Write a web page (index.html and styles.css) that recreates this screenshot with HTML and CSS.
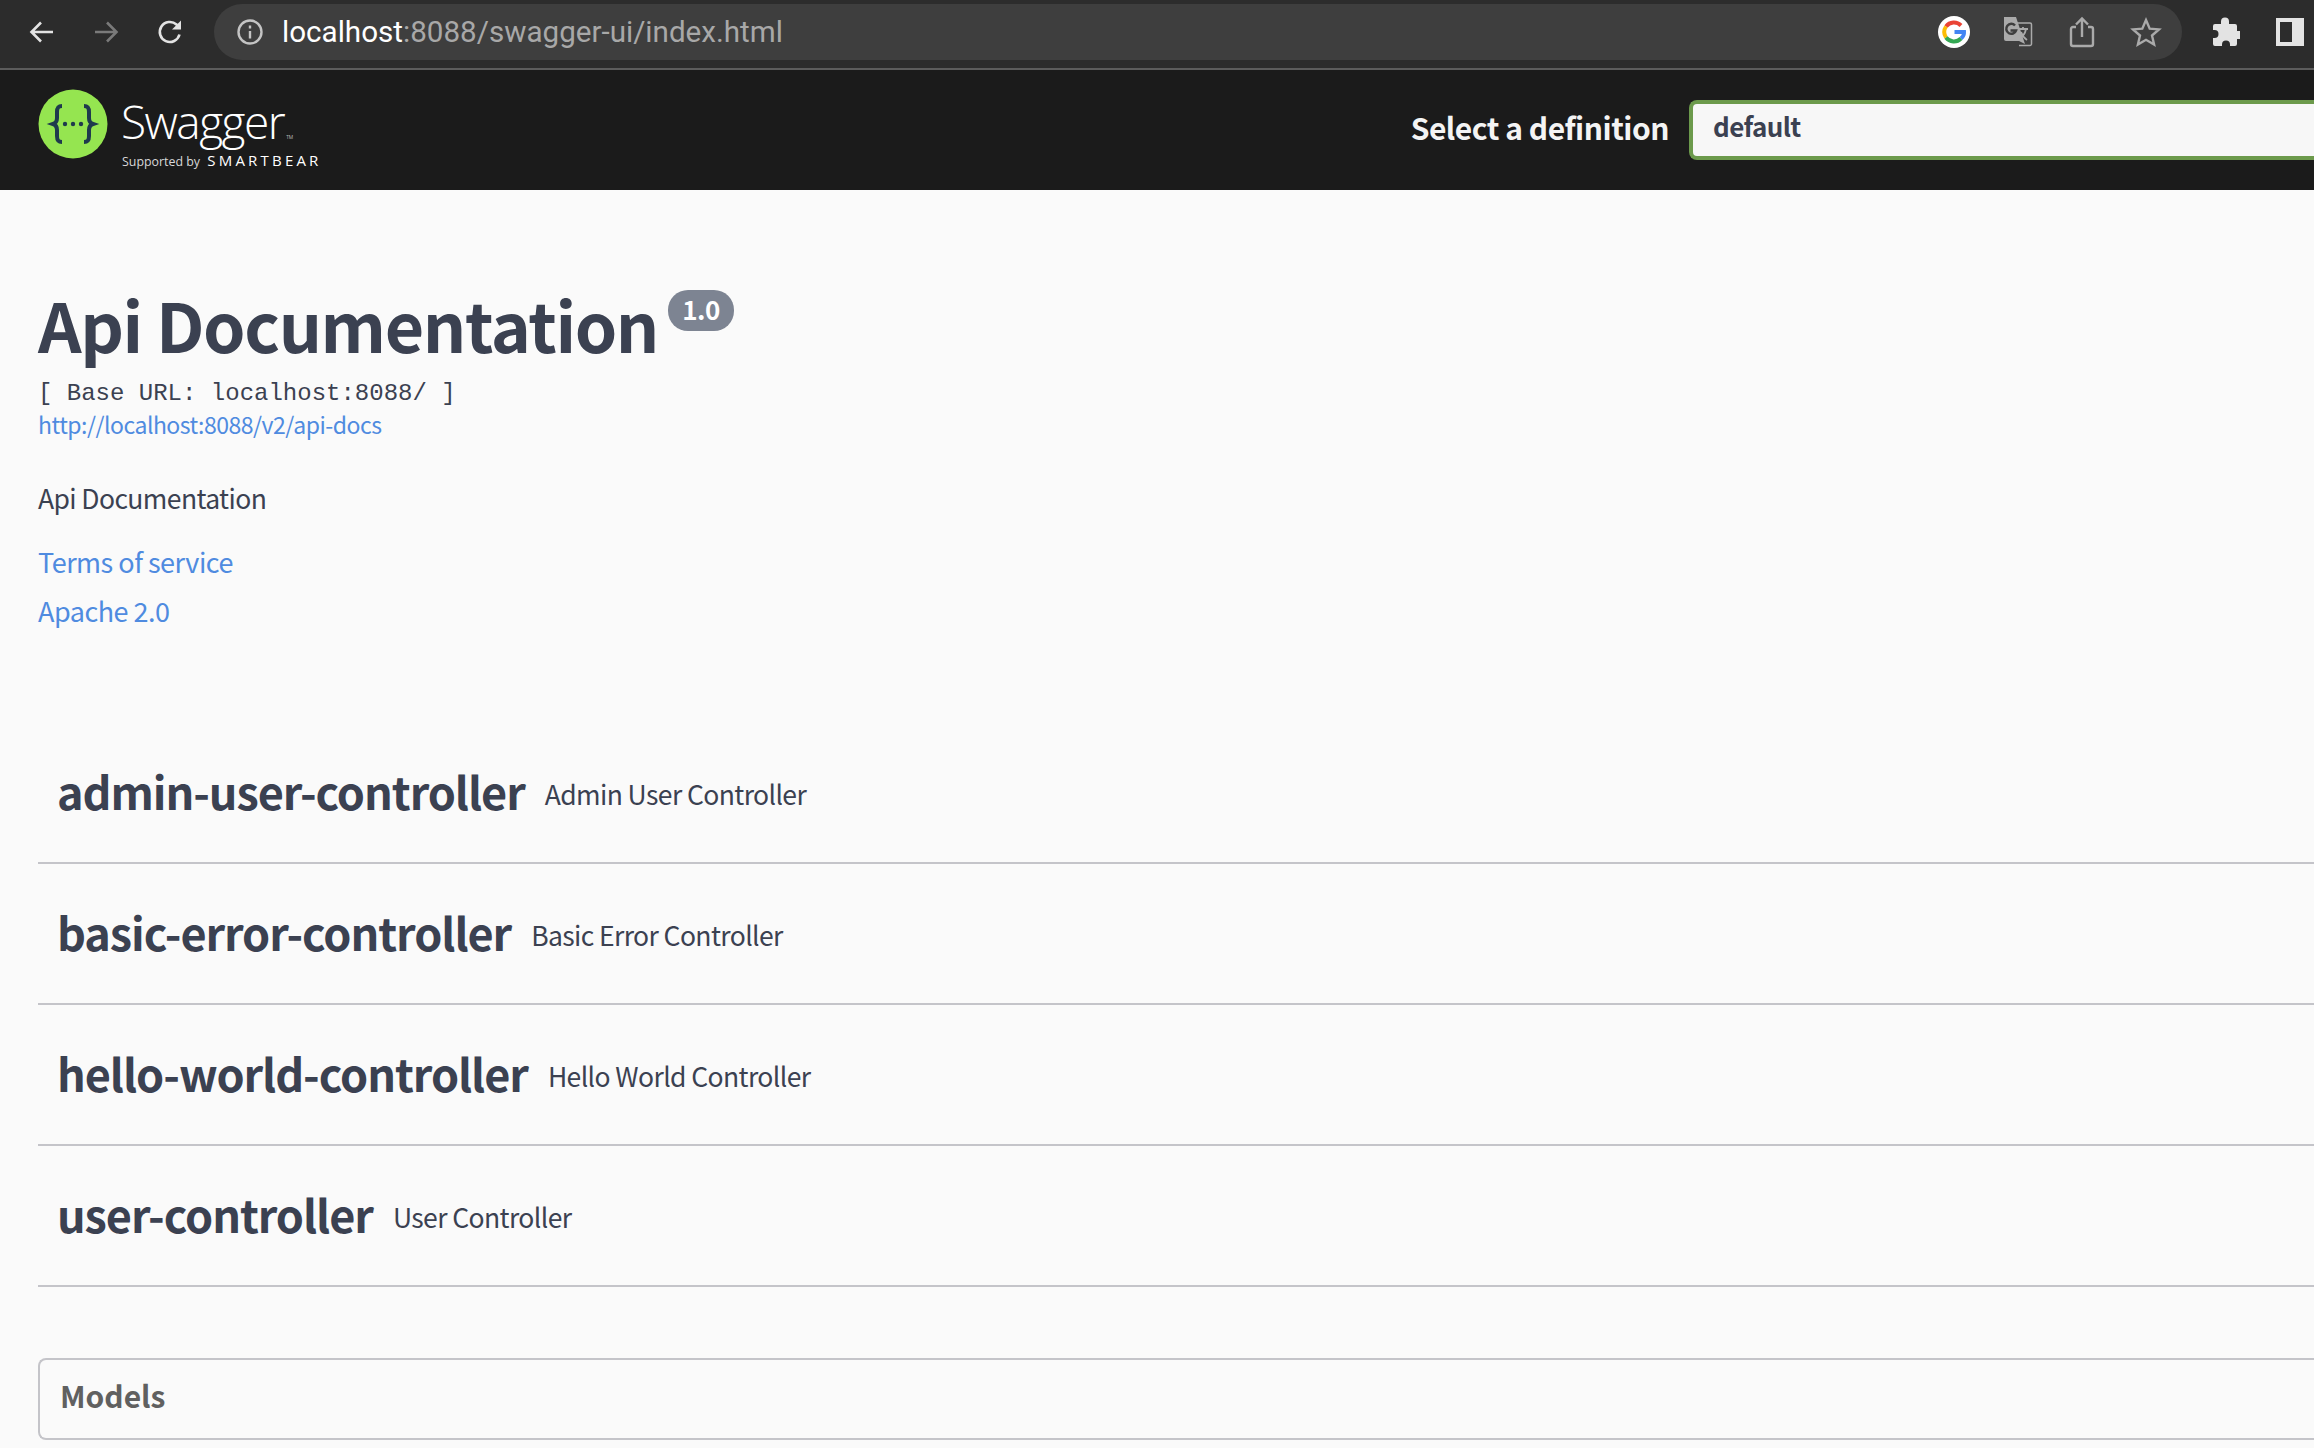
FILE: index.html
```html
<!DOCTYPE html>
<html lang="en">
<head>
    <meta charset="UTF-8">
    <meta name="viewport" content="width=device-width, initial-scale=1.0">
    <title>Swagger UI</title>
    <link rel="stylesheet" href="styles.css">
</head>
<body>
    <div class="browser-bar">
        <div class="nav-buttons">
            <svg class="nav-icon" viewBox="0 0 28 28"><path d="M25 14H4M13 4.500L3.500 14l9.500 9.500"/></svg>
            <svg class="nav-icon nav-icon-off" viewBox="0 0 28 28"><path d="M3 14h21M15 4.500l9.500 9.500-9.500 9.500"/></svg>
            <svg class="nav-icon" viewBox="0 0 28 28"><path d="M23.500 16.500A10 10 0 1 1 20.500 6.500L24 10"/><path class="solid" d="M25 2.500V11.500H16z"/></svg>
        </div>
        <div class="omnibox">
            <svg class="info-icon" viewBox="0 0 28 28"><circle cx="14" cy="14" r="11.500"/><path d="M14 13v7.500M14 7.500v3"/></svg>
            <div class="url"><span class="url-host">localhost</span>:8088/swagger-ui/index.html</div>
            <div class="omni-actions">
                <svg class="omni-icon" viewBox="0 0 32 32">
                    <circle cx="16" cy="16" r="16" fill="#fff"/>
                    <path d="M23 9.500A10 10 0 0 0 8 10.500" stroke="#ea4335"/>
                    <path d="M8 10.500a10 10 0 0 0 0 11" stroke="#fbbc05"/>
                    <path d="M8 21.500a10 10 0 0 0 15 1" stroke="#34a853"/>
                    <path d="M16.500 16H26c.2 3-1 5-3 6.500" stroke="#4285f4"/>
                </svg>
                <svg class="omni-icon translate-icon" viewBox="0 0 32 32">
                    <path fill="#aaa" d="M3 1h12l9 27-6-3H5a2 2 0 0 1-2-2z"/>
                    <path fill="none" stroke="#aaa" stroke-width="1.500" d="M15 7h14a1.500 1.500 0 0 1 1.500 1.500V28a1.500 1.500 0 0 1-1.500 1.500H18"/>
                    <path fill="none" stroke="#3e3e3e" stroke-width="2.500" d="M14 9.500a5 5 0 1 0 1 5H9.500"/>
                    <path fill="none" stroke="#aaa" stroke-width="1.800" d="M18 13h9M22 11v2M25 13c-1 5-4 8-6.500 9M20 16c1 3 3 6 6 8"/>
                </svg>
                <svg class="omni-icon share-icon" viewBox="0 0 32 32"><path d="M10 11H7a2 2 0 0 0-2 2v15a2 2 0 0 0 2 2h18a2 2 0 0 0 2-2V13a2 2 0 0 0-2-2h-3M16 21V3M10 8.500L16 2.500l6 6"/></svg>
                <svg class="omni-icon star-icon" viewBox="0 0 32 32"><path d="M16 4l3.700 8.600 9.300.8-7 6.100 2.100 9.100L16 23.800l-8.100 4.800L10 19.500l-7-6.100 9.300-.8z"/></svg>
            </div>
        </div>
        <div class="ext-buttons">
            <svg class="ext-icon" viewBox="0 0 30 30"><path fill="#e3e3e3" d="M11 4.500a4 4 0 0 1 8 0V7h6a2 2 0 0 1 2 2v5h2a4 4 0 0 1 0 8h-2v5a2 2 0 0 1-2 2h-5v-1.500a4 4 0 0 0-8 0V29H5a2 2 0 0 1-2-2v-6h1.500a4 4 0 0 0 0-8H3V9a2 2 0 0 1 2-2h6z"/></svg>
            <div class="panel-icon"></div>
        </div>
    </div>

    <div class="topbar">
        <div class="logo">
            <svg class="logo-mark" viewBox="0 0 70 70">
                <circle cx="35" cy="35" r="34.500" fill="#95e550"/>
                <path class="brace" d="M24 17c-4 0-5 2-5 6v6c0 3-1 5-4 6 3 1 4 3 4 6v6c0 4 1 6 5 6"/>
                <path class="brace" d="M46 17c4 0 5 2 5 6v6c0 3 1 5 4 6-3 1-4 3-4 6v6c0 4-1 6-5 6"/>
                <circle cx="27" cy="35" r="2.200" fill="#1f3a4d"/>
                <circle cx="35" cy="35" r="2.200" fill="#1f3a4d"/>
                <circle cx="43" cy="35" r="2.200" fill="#1f3a4d"/>
            </svg>
            <div class="logo-text">
                <div class="logo-name">Swagger<span class="logo-tm">TM</span></div>
                <div class="logo-sub">Supported by <span class="logo-bear">SMARTBEAR</span></div>
            </div>
        </div>
        <div class="definition">
            <span class="definition-label">Select a definition</span>
            <div class="definition-select">default</div>
        </div>
    </div>

    <div class="page">
        <div class="info">
            <div class="title-row">
                <h2 class="title">Api Documentation</h2>
                <span class="version">1.0</span>
            </div>
            <div class="base-url">[ Base URL: localhost:8088/ ]</div>
            <a class="spec-link" href="#">http://localhost:8088/v2/api-docs</a>
            <p class="description">Api Documentation</p>
            <a class="info-link terms" href="#">Terms of service</a>
            <a class="info-link" href="#">Apache 2.0</a>
        </div>

        <div class="tags">
            <div class="tag">
                <h3>admin-user-controller</h3>
                <small>Admin User Controller</small>
            </div>
            <div class="tag">
                <h3>basic-error-controller</h3>
                <small>Basic Error Controller</small>
            </div>
            <div class="tag">
                <h3>hello-world-controller</h3>
                <small>Hello World Controller</small>
            </div>
            <div class="tag">
                <h3>user-controller</h3>
                <small>User Controller</small>
            </div>
        </div>

        <div class="models">
            <h4>Models</h4>
        </div>
    </div>
</body>
</html>
```

FILE: styles.css
```css
html, body {
    margin: 0;
    padding: 0;
}

body {
    height: 1448px;
    overflow: hidden;
    background-color: #fafafa;
    font-family: 'Noto Sans CJK KR', 'Noto Sans', sans-serif;
    color: #3b4151;
}

/* browser chrome */
.browser-bar {
    height: 64px;
    padding-bottom: 4px;
    display: flex;
    align-items: center;
    background-color: #2c2c2c;
    border-bottom: 2px solid #5c5c5c;
}

.nav-buttons {
    display: flex;
    gap: 36px;
    padding-left: 28px;
    width: 186px;
    box-sizing: border-box;
}

.nav-icon {
    width: 28px;
    height: 28px;
    fill: none;
    stroke: #e3e3e3;
    stroke-width: 2.6;
}

.nav-icon .solid {
    fill: #e3e3e3;
    stroke: none;
}

.nav-icon-off {
    stroke: #7a7a7a;
}

.omnibox {
    flex: none;
    width: 1968px;
    height: 56px;
    margin-left: 28px;
    display: flex;
    align-items: center;
    background-color: #3e3e3e;
    border-radius: 28px;
}

.info-icon {
    width: 28px;
    height: 28px;
    margin-left: 22px;
    fill: none;
    stroke: #c4c4c4;
    stroke-width: 2.4;
}

.url {
    margin-left: 18px;
    font-family: Roboto, sans-serif;
    font-size: 29.6px;
    color: #a8a8a8;
}

.url-host {
    color: #fff;
}

.omni-actions {
    margin-left: auto;
    display: flex;
    align-items: center;
    gap: 31px;
    padding-right: 20px;
}

.omni-icon {
    width: 32px;
    height: 32px;
    fill: none;
    stroke-width: 4;
}

.translate-icon {
    margin-right: 3px;
}

.share-icon, .star-icon {
    stroke: #aaa;
    stroke-width: 2.4;
}

.share-icon {
    margin-left: -1px;
    margin-right: 1px;
}

.ext-buttons {
    flex: none;
    display: flex;
    align-items: center;
    gap: 22px;
    margin-left: 28px;
}

.ext-icon {
    width: 30px;
    height: 30px;
}

.panel-icon {
    width: 28px;
    height: 28px;
    margin-left: 14px;
    box-sizing: border-box;
    border: 4px solid #e3e3e3;
    border-right-width: 12px;
}

/* swagger top bar */
.topbar {
    height: 120px;
    display: flex;
    align-items: center;
    justify-content: space-between;
    padding-left: 38px;
    background-color: #1b1b1b;
}

.logo {
    display: flex;
    align-items: center;
    gap: 14px;
    padding-bottom: 12px;
}

.logo-mark {
    width: 70px;
    height: 70px;
}

.brace {
    fill: none;
    stroke: #1f3a4d;
    stroke-width: 4;
}

.logo-text {
    margin-top: 32px;
    color: #fff;
}

.logo-name {
    margin-left: -1px;
    font-family: 'Open Sans', sans-serif;
    font-weight: 300;
    font-size: 46px;
    line-height: 26px;
    letter-spacing: -1.5px;
}

.logo-tm {
    font-size: 5px;
    letter-spacing: 0;
    margin-left: 2px;
}

.logo-sub {
    font-family: 'Open Sans', sans-serif;
    font-size: 12.4px;
    line-height: 20px;
    color: #d8d8d8;
}

.logo-bear {
    margin-left: 4px;
    font-size: 15px;
    font-weight: 500;
    letter-spacing: 3.2px;
    color: #fff;
}

.definition {
    display: flex;
    align-items: center;
    gap: 20px;
}

.definition-label {
    padding-bottom: 6px;
    font-size: 30px;
    font-weight: 700;
    letter-spacing: -0.48px;
    color: #f4f4f4;
}

.definition-select {
    width: 625px;
    height: 60px;
    box-sizing: border-box;
    padding-left: 20px;
    font-size: 26px;
    font-weight: 700;
    letter-spacing: -0.6px;
    line-height: 44px;
    background-color: #f7f7f7;
    border: 4px solid #6c9a4c;
    border-right: none;
    border-radius: 8px 0 0 8px;
}

/* page content */
.page {
    padding-left: 38px;
}

.info {
    padding-top: 84px;
}

.title-row {
    display: flex;
    align-items: flex-start;
    gap: 10px;
}

.title {
    margin: 0;
    font-size: 68px;
    font-weight: 700;
    letter-spacing: -1.4px;
    line-height: 100px;
}

.version {
    margin-top: 16px;
    width: 66px;
    height: 41px;
    font-size: 26px;
    font-weight: 700;
    letter-spacing: -0.5px;
    line-height: 37px;
    text-align: center;
    color: #fff;
    background-color: #7d8492;
    border-radius: 20px;
}

.base-url {
    margin-top: 4px;
    font-family: 'Liberation Mono', monospace;
    font-size: 24px;
    line-height: 32px;
}

.spec-link, .info-link {
    display: block;
    color: #4f8be0;
    text-decoration: none;
}

.spec-link {
    font-size: 23px;
    letter-spacing: -0.5px;
    line-height: 28px;
}

.description {
    margin: 40px 0 0;
    font-size: 26.5px;
    letter-spacing: -0.6px;
    line-height: 40px;
}

.info-link {
    font-size: 27px;
    letter-spacing: -0.5px;
    line-height: 40px;
    margin-top: 9px;
}

.terms {
    margin-top: 24px;
}

.tags {
    margin-top: 92px;
}

.tag {
    height: 141px;
    display: flex;
    align-items: center;
    gap: 20px;
    padding: 0 0 3px 19px;
    border-bottom: 2px solid #c4c4c9;
    box-sizing: border-box;
}

.tag h3 {
    margin: 0;
    font-size: 45px;
    font-weight: 700;
    letter-spacing: -1.05px;
    line-height: 110px;
}

.tag small {
    padding-top: 5px;
    font-size: 26.5px;
    letter-spacing: -0.6px;
}

.models {
    margin-top: 71px;
    height: 82px;
    box-sizing: border-box;
    border: 2px solid #c4c4c9;
    border-right: none;
    border-radius: 8px 0 0 8px;
    padding-left: 20px;
}

.models h4 {
    margin: 0;
    font-size: 30px;
    font-weight: 700;
    line-height: 70px;
    color: #606060;
}
```
